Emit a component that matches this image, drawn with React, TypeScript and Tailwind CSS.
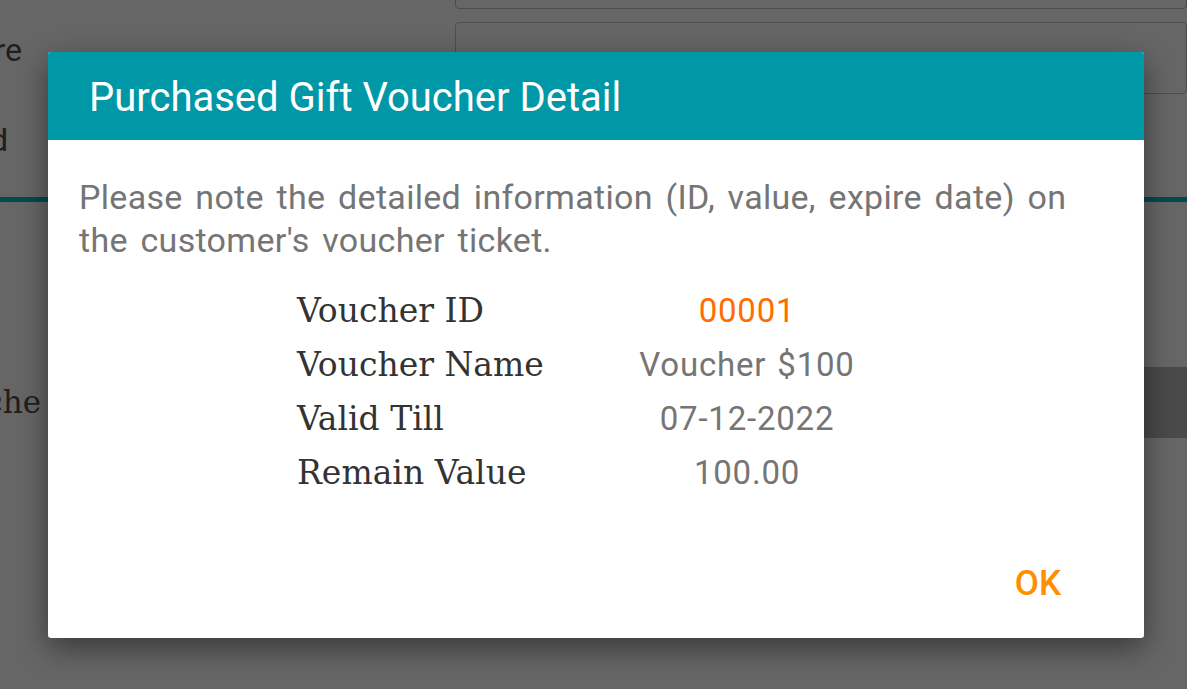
import React from "react";

const rows: { label: string; value: string; accent?: boolean }[] = [
  { label: "Voucher ID", value: "00001", accent: true },
  { label: "Voucher Name", value: "Voucher $100" },
  { label: "Valid Till", value: "07-12-2022" },
  { label: "Remain Value", value: "100.00" },
];

export default function App() {
  return (
    <div className="relative w-[1187px] h-[689px] overflow-hidden bg-[#666666] font-['Roboto',sans-serif]">
      {/* dimmed page underneath */}
      <div className="flex flex-col">
        <div className="flex h-[197px]">
          <div className="w-[455px] flex flex-col text-[#1e1e1e] text-[32px] leading-none">
            <div className="h-[34px]" />
            <div className="h-[90px] w-[22px] flex justify-end whitespace-nowrap">Pre</div>
            <div className="h-[40px] w-[8px] flex justify-end whitespace-nowrap">d</div>
          </div>
          <div className="flex-1 flex flex-col gap-[13px] -mt-[10px]">
            <div className="h-[19px] rounded-[4px] border border-[#4d4d4d]" />
            <div className="h-[72px] rounded-[4px] border border-[#4d4d4d]" />
          </div>
        </div>
        <div className="h-[5px] bg-[#004b50]" />
        <div className="h-[165px]" />
        <div className="flex h-[71px] items-center">
          <div className="w-[41px] flex justify-end whitespace-nowrap font-['DejaVu_Serif',serif] text-[31px] text-[#1e1e1e]">
            Vouche
          </div>
          <div className="w-[559px]" />
          <div className="flex-1 h-full bg-[#4a4a4a]" />
        </div>
      </div>

      {/* dialog */}
      <div className="absolute left-[48px] top-[52px] w-[1096px] h-[586px] bg-white rounded-[3px] shadow-[0_10px_30px_rgba(0,0,0,0.45)] flex flex-col overflow-hidden">
        <div className="h-[88px] bg-[#0097a7] flex items-center pl-[41px] pt-[4px]">
          <span className="text-white text-[40px] leading-none">Purchased Gift Voucher Detail</span>
        </div>
        <div className="px-[31px] pt-[36px] text-[#757575] text-[34px] leading-[43px] tracking-[0.3px] [word-spacing:4px]">
          Please note the detailed information (ID, value, expire date) on the customer's voucher ticket.
        </div>
        <div className="mt-[22px] flex flex-col">
          {rows.map((r) => (
            <div key={r.label} className="flex h-[54px] items-center">
              <div className="w-[249px]" />
              <div className="w-[300px] font-['DejaVu_Serif',serif] text-[33px] text-[#333333]">{r.label}</div>
              <div
                className={
                  "w-[300px] text-center text-[33px] tracking-[0.8px] [word-spacing:2px] " +
                  (r.accent ? "text-[#ff6d00]" : "text-[#757575]")
                }
              >
                {r.value}
              </div>
            </div>
          ))}
        </div>
        <div className="flex-1 flex items-center justify-end pr-[83px] pt-[30px]">
          <span className="text-[#ff8f00] text-[35px] font-medium">OK</span>
        </div>
      </div>
    </div>
  );
}
